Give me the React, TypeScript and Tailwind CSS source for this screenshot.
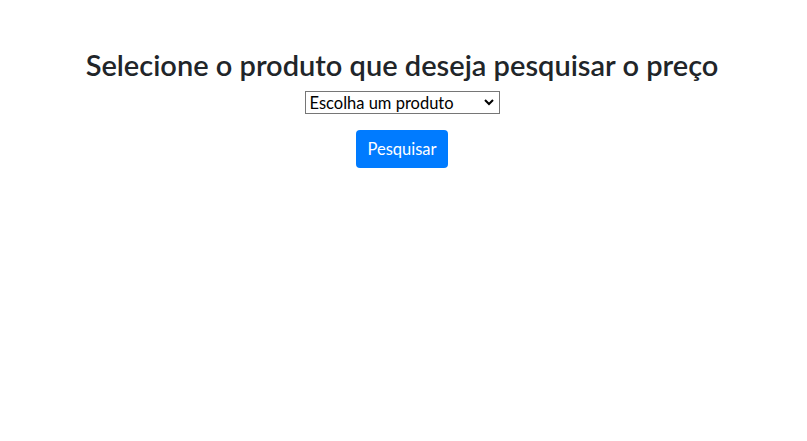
import React from "react";

export default function App() {
  return (
    <div className="min-h-[441px] w-full bg-white text-[#212529]" style={{ fontFamily: '"Lato", "Noto Sans", sans-serif' }}>
      <div className="flex flex-col items-center pt-[47px] pr-[3px]">
        <h3 className="text-[29px] font-semibold leading-[36px] mb-[8px]">
          Selecione o produto que deseja pesquisar o preço
        </h3>
        <div className="relative w-[195px] h-[23px]">
          <select className="block appearance-none w-full h-full border border-[#767676] rounded-none bg-white pl-[4px] text-[16.5px] leading-[20px] text-black outline-none" style={{ fontFamily: '"Lato", sans-serif' }} defaultValue="">
            <option value="">Escolha um produto</option>
          </select>
          <svg className="pointer-events-none absolute right-[6px] top-[7px]" width="10" height="8" viewBox="0 0 10 8">
            <path d="M1 2 L5 6 L9 2" fill="none" stroke="#000" strokeWidth="2" />
          </svg>
        </div>
        <button className="mt-[16px] h-[38px] w-[92px] rounded-[4px] bg-[#007bff] text-white text-[16.5px]">
          Pesquisar
        </button>
      </div>
    </div>
  );
}
